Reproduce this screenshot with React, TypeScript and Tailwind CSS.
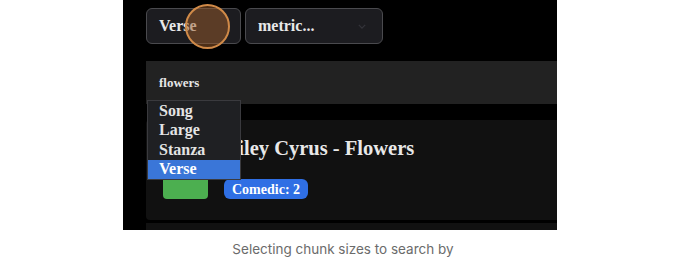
const serif = "font-['Liberation_Serif',serif]";

const chunkOptions = ["Song", "Large", "Stanza", "Verse"];

const App = () => {
  return (
    <div className="w-[680px] h-[260px] bg-white flex flex-col">
      {/* Video frame */}
      <div className={`relative ml-[123px] w-[434px] h-[230px] bg-black overflow-hidden ${serif}`}>
        <div className="pl-[23px] pt-[8px] w-[460px]">
          {/* Selects */}
          <div className="flex gap-[4px]">
            <div className="w-[95px] h-[36px] rounded-md border border-[#4a4a4e] bg-[#1c1c20] flex items-center px-[12px] text-[16px] font-bold text-[#e8e8e8]">
              Verse
            </div>
            <div className="w-[138px] h-[36px] rounded-md border border-[#4a4a4e] bg-[#1c1c20] flex items-center justify-between px-[12px] text-[16px] font-bold text-[#e8e8e8]">
              <span>metric...</span>
              <svg width="8" height="5" viewBox="0 0 10 6" fill="none" className="mr-[4px]">
                <path d="M1 1l4 4 4-4" stroke="#34343a" strokeWidth="1.5" />
              </svg>
            </div>
          </div>

          {/* Search */}
          <div className="mt-[17px] h-[43px] bg-[#222222] flex items-center pl-[13px] text-[13px] font-bold text-[#e6e6e6]">
            flowers
          </div>

          {/* Result card */}
          <div className="mt-[16px] h-[100px] bg-[#111111] rounded-sm flex flex-col">
            <div className="pl-[73px] pt-[15px] text-[20.5px] font-bold text-[#e8e8e8] leading-[26px]">
              Miley Cyrus - Flowers
            </div>
            <div className="flex items-end gap-[16px] pl-[17px] mt-[8px]">
              <div className="w-[45px] h-[30px] rounded-sm bg-[#4caf50]" />
              <div className="h-[20px] px-[8px] rounded-md bg-[#2f6fe4] flex items-center text-[14px] font-bold text-white">
                Comedic: 2
              </div>
            </div>
          </div>
          <div className="mt-[3px] h-[20px] bg-[#111111]" />
        </div>

        {/* Open dropdown */}
        <div className="absolute left-[24px] top-[100px] w-[94px] bg-[#1f2023] border border-[#3a3a3e] flex flex-col">
          {chunkOptions.map((opt) => (
            <div
              key={opt}
              className={`h-[19.5px] pl-[11px] flex items-center text-[16px] font-bold ${
                opt === "Verse" ? "bg-[#3a76d8] text-white" : "text-[#e4e4e4]"
              }`}
            >
              {opt}
            </div>
          ))}
        </div>

        {/* Click indicator */}
        <div className="absolute left-[62px] top-[4px] w-[45px] h-[45px] rounded-full border-2 border-[#d08a48] bg-[#9a5c2c]/50" />
      </div>

      {/* Caption */}
      <div className="flex-1 flex items-center justify-center pt-[8px] pl-[6px] font-['Inter',sans-serif] text-[13.5px] text-[#6b6b6b]">
        Selecting chunk sizes to search by
      </div>
    </div>
  );
};

export default App;
